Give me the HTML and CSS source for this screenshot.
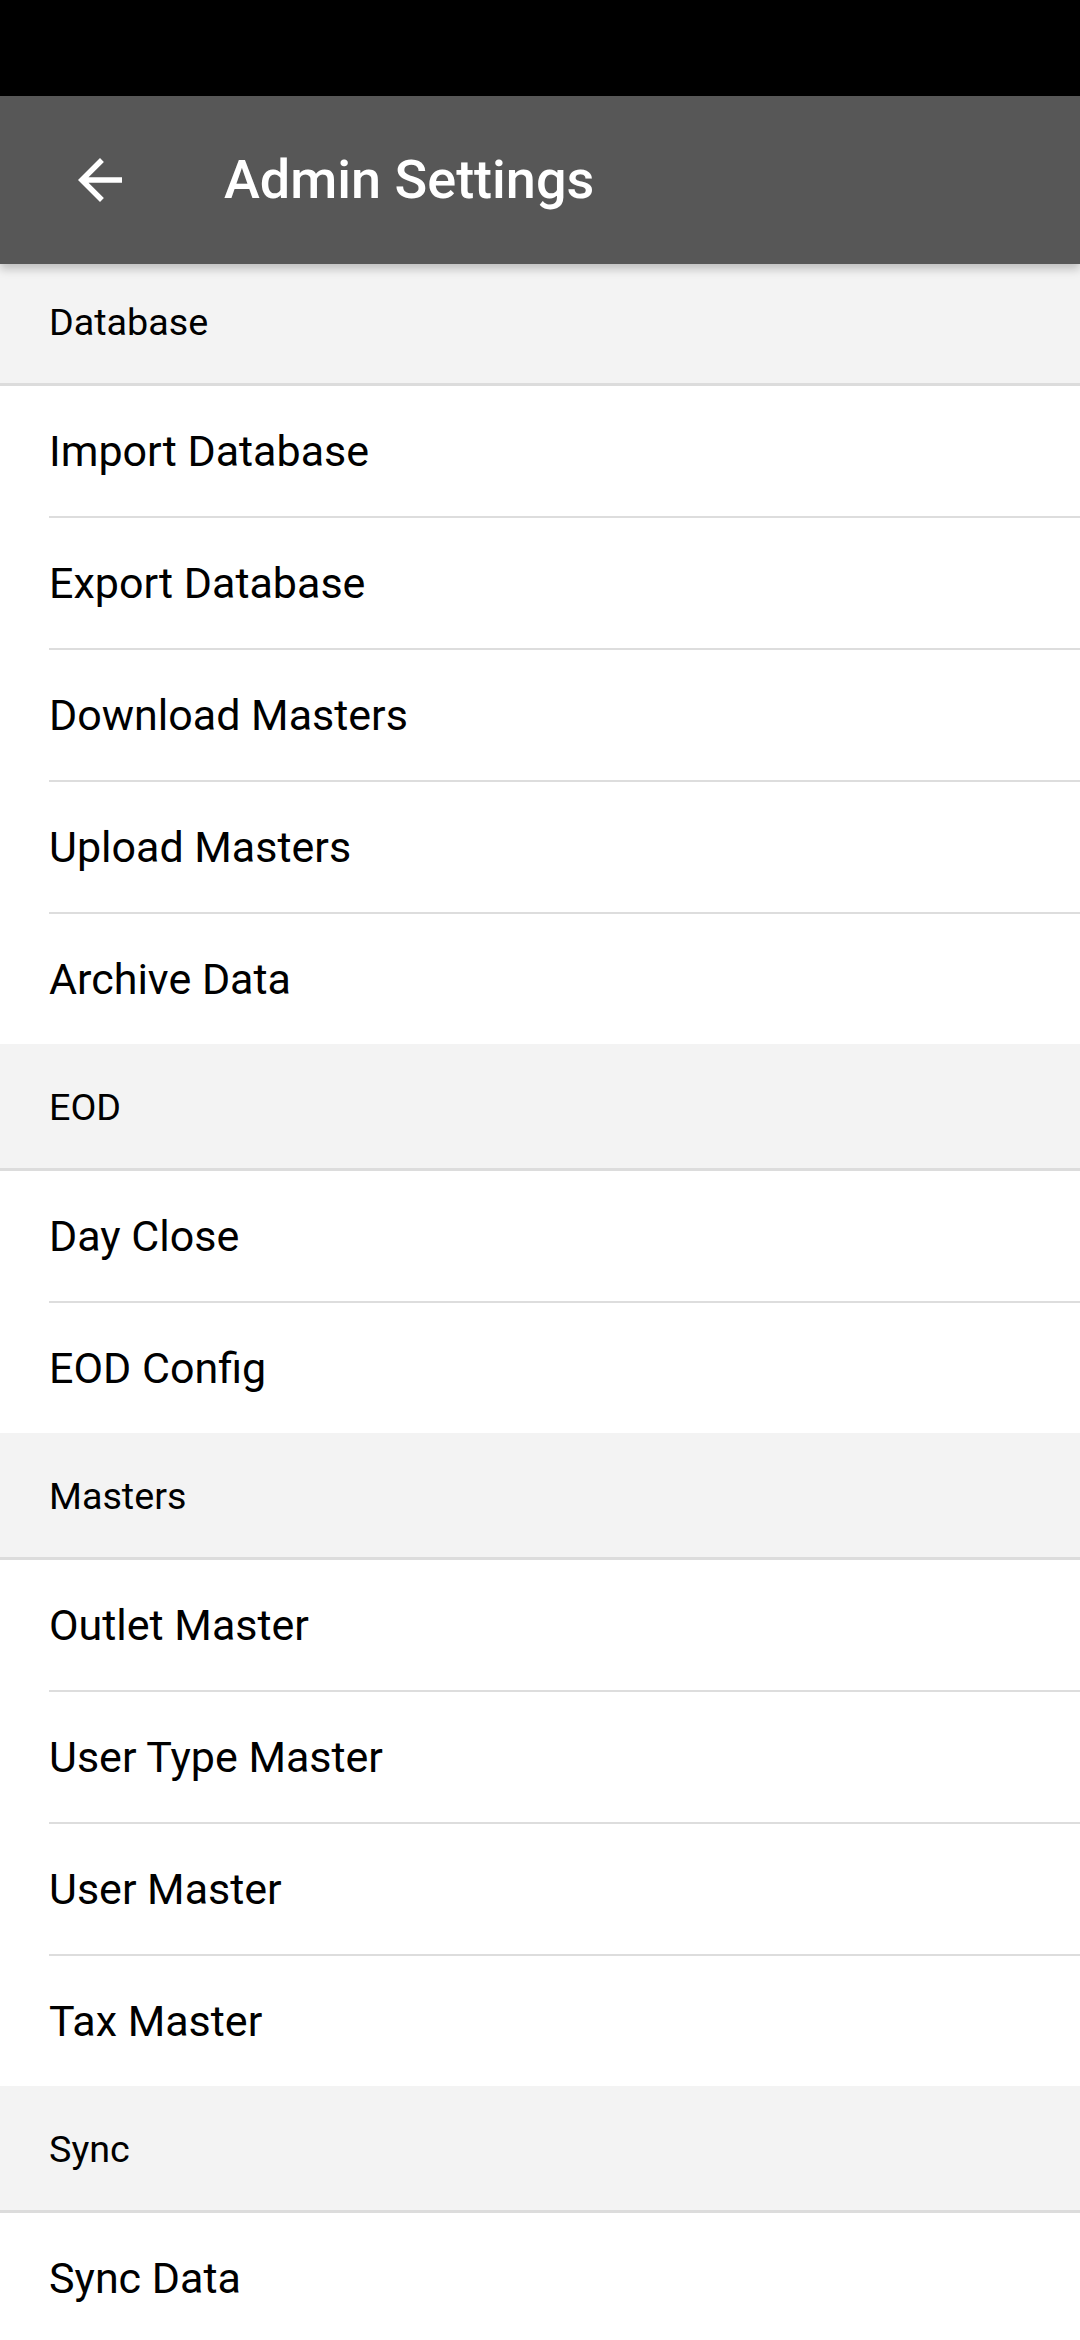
FILE: index.html
```html
<!DOCTYPE html>
<html lang="en">
<head>
<meta charset="utf-8">
<title>Admin Settings</title>
<link rel="stylesheet" href="styles.css">
</head>
<body>
<div class="status-bar"></div>
<header class="toolbar">
  <span class="nav-icon">
    <svg viewBox="0 0 24 24" width="66" height="66"><path fill="#ffffff" d="M20 11H7.83l5.59-5.59L12 4l-8 8 8 8 1.41-1.41L7.83 13H20v-2z"/></svg>
  </span>
  <h1 class="title">Admin Settings</h1>
</header>
<main class="list">
  <div class="section">Database</div>
  <div class="item">Import Database</div>
  <div class="item">Export Database</div>
  <div class="item">Download Masters</div>
  <div class="item">Upload Masters</div>
  <div class="item last">Archive Data</div>
  <div class="section">EOD</div>
  <div class="item">Day Close</div>
  <div class="item last">EOD Config</div>
  <div class="section">Masters</div>
  <div class="item">Outlet Master</div>
  <div class="item">User Type Master</div>
  <div class="item">User Master</div>
  <div class="item last">Tax Master</div>
  <div class="section">Sync</div>
  <div class="item last">Sync Data</div>
</main>
</body>
</html>
```

FILE: styles.css
```css
* { box-sizing: border-box; }
html, body {
  margin: 0;
  padding: 0;
  background: #ffffff;
  font-family: Roboto, "Noto Sans", "Liberation Sans", sans-serif;
}
body { width: 1080px; overflow-x: hidden; }
.status-bar {
  height: 96px;
  background: #000000;
}
.toolbar {
  position: relative;
  z-index: 1;
  height: 168px;
  background: #575757;
  display: flex;
  align-items: center;
  box-shadow: 0 5px 9px rgba(0, 0, 0, 0.22);
}
.nav-icon {
  display: flex;
  width: 66px;
  height: 66px;
  margin-left: 67px;
}
.title {
  margin: 0 0 0 91px;
  color: #ffffff;
  font-size: 54px;
  font-weight: 500;
  line-height: 1;
  letter-spacing: 0;
}
.list {
  margin-top: -5px;
}
.section {
  height: 127px;
  display: flex;
  align-items: center;
  padding-left: 49px;
  padding-top: 2px;
  background: #f3f3f3;
  border-bottom: 3px solid #dcdcdc;
  font-size: 37.7px;
  color: #000000;
}
.item {
  height: 132px;
  margin-left: 49px;
  display: flex;
  align-items: center;
  border-bottom: 2px solid #dddddd;
  font-size: 43px;
  color: #000000;
}
.item.last {
  height: 130px;
  border-bottom: none;
}
```
